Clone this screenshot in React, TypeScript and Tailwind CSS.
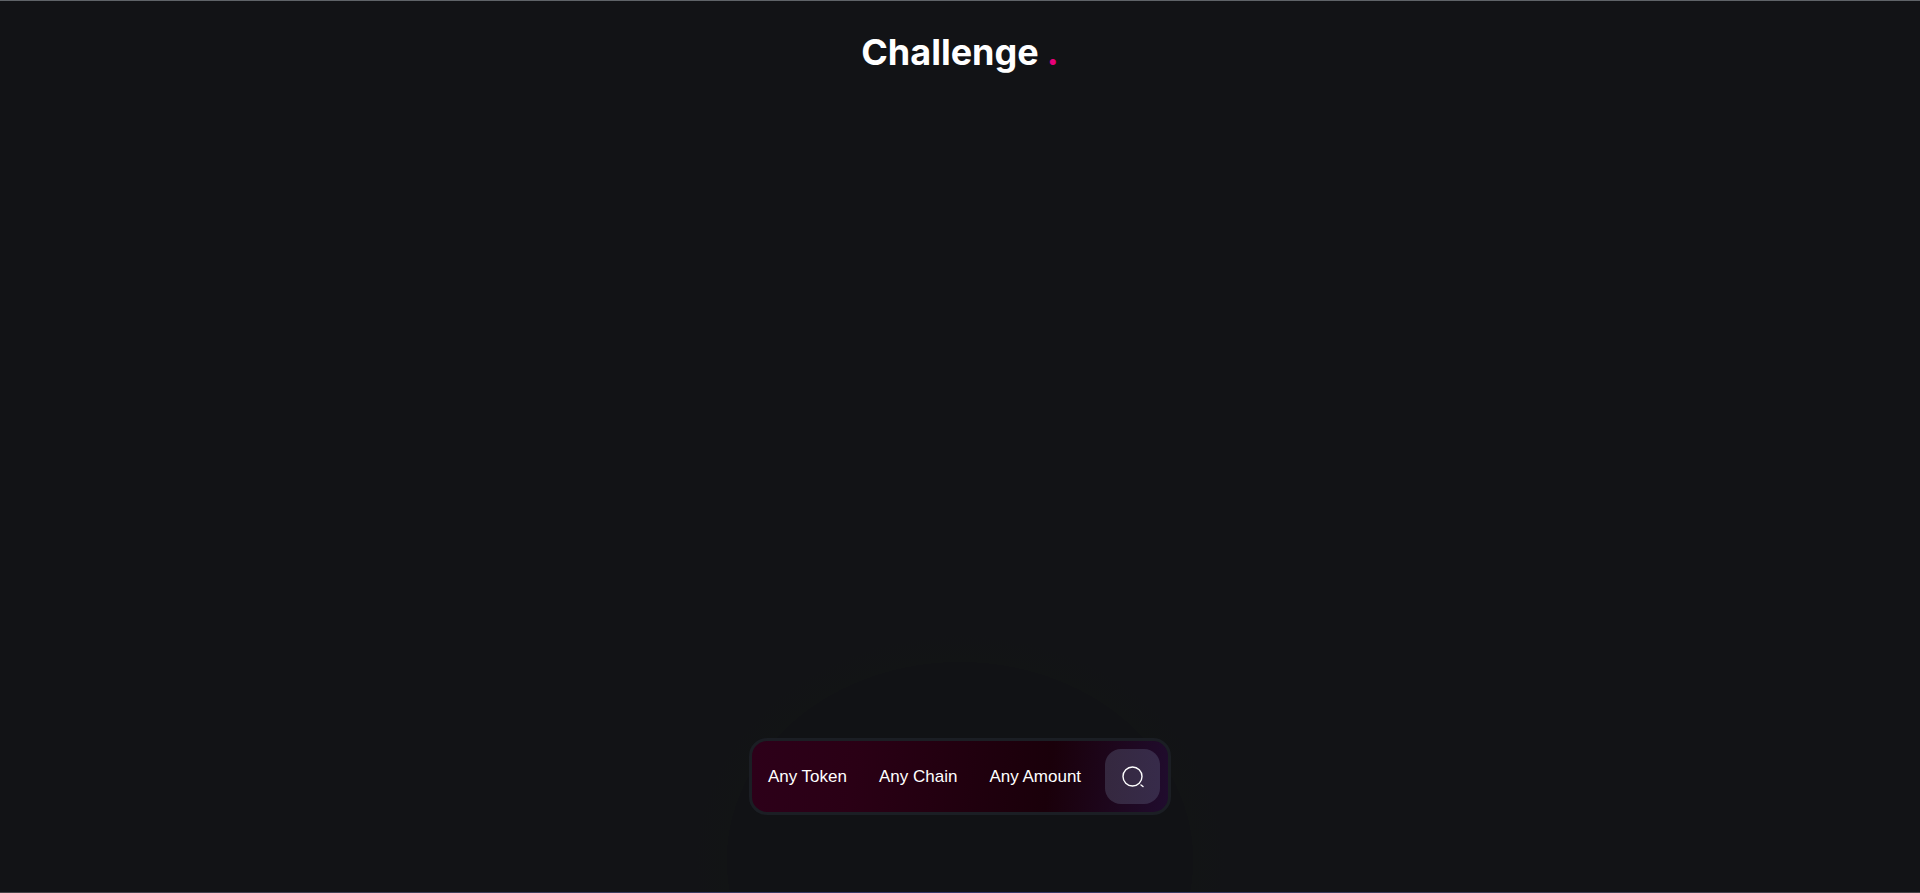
const filters = ["Any Token", "Any Chain", "Any Amount"];

export default function App() {
  return (
    <div className="flex min-h-screen flex-col bg-[#5f6368] font-['Liberation_Sans',Arial,sans-serif]">
      <main className="mt-px flex grow flex-col items-center justify-between bg-[#121316] bg-[radial-gradient(ellipse_265px_225px_at_50%_calc(100%_-_32px),#111215_88%,#121415_88%,transparent_100%)] pt-6">
        <h1 className="flex items-baseline gap-2 font-['Inter',sans-serif] text-[36px] leading-[54px] font-bold text-white">
          Challenge
          <span className="text-[#e6007a]">.</span>
        </h1>
        <form
          className="mb-[77px] flex items-center rounded-[18px] border-3 border-[#1b1e24] bg-[linear-gradient(97deg,#2d0019_0%,#2a0015_25%,#1a000a_71%,#200c2e_100%)] py-2 pr-2 pl-4"
          onSubmit={(event) => event.preventDefault()}
        >
          <div className="flex gap-8 text-[17px] leading-6 text-white">
            {filters.map((label) => (
              <button key={label} type="button">
                {label}
              </button>
            ))}
          </div>
          <button
            type="submit"
            aria-label="Search"
            className="ml-6 flex size-[55px] items-center justify-center rounded-2xl bg-linear-to-r from-[#35283f] to-[#372b4a]"
          >
            <svg viewBox="0 0 24 24" className="size-6" fill="none" stroke="white" strokeWidth="1.4" strokeLinecap="round">
              <circle cx="11.5" cy="11.5" r="9.5" />
              <path d="M20 20l2 1.5" />
            </svg>
          </button>
        </form>
      </main>
      <div className="h-px bg-linear-to-r from-[#454347] via-[#33386a] to-[#454347]" />
    </div>
  );
}
